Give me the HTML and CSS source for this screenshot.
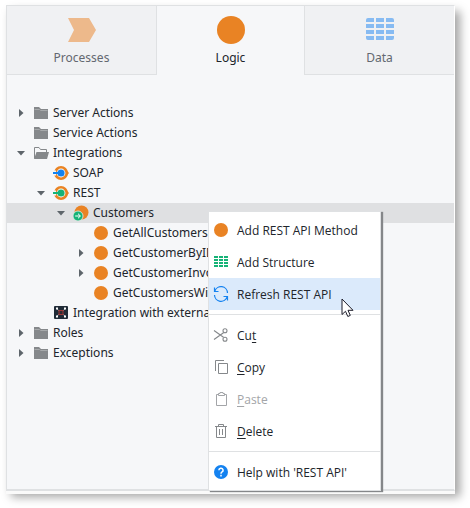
FILE: index.html
```html
<!DOCTYPE html>
<html lang="en">
<head>
<meta charset="utf-8">
<title>Logic</title>
<link rel="stylesheet" href="styles.css">
</head>
<body>
<svg class="defs" aria-hidden="true">
  <symbol id="right" viewBox="0 0 8 8"><path d="M2 0v8l4.500-4z" fill="#5e656b"/></symbol>
  <symbol id="down" viewBox="0 0 8 8"><path d="M0 2h8L4 6.500z" fill="#5e656b"/></symbol>
  <symbol id="folder" viewBox="0 0 16 16"><path d="M1 2h5l2 2h7v10H1z" fill="#85888b"/><path d="M1.500 4.500h5l1 1h7" fill="none" stroke="#a6a9ab"/></symbol>
  <symbol id="open" viewBox="0 0 16 16"><path d="M1.500 13.500v-11h4.500l1.500 2h6v2.500" fill="none" stroke="#85888b"/><path d="M3.500 7H16l-2 7H1z" fill="#85888b"/></symbol>
  <symbol id="dot" viewBox="0 0 16 16"><circle cx="8" cy="8" r="7" fill="#e98324"/></symbol>
  <symbol id="service" viewBox="0 0 16 16"><circle cx="8" cy="8" r="5.700" fill="#fff" stroke="#e98324" stroke-width="2.600"/><path d="M14 5.500l2 2.500-2 2.500z" fill="#e98324"/><path d="M0 5.500h3v5H0z" fill="#f6f7f9"/><path d="M0 8h8" stroke="currentColor" stroke-width="2"/><circle cx="8" cy="8" r="3.600" fill="currentColor"/></symbol>
  <symbol id="consumed" viewBox="0 0 16 16"><circle cx="8.500" cy="7.500" r="7" fill="#e98324"/><circle cx="5" cy="11" r="5" fill="#16b377" stroke="#e8eeeb" stroke-width=".8"/><path d="M2.200 11h5M5 8.700L7.400 11 5 13.300" fill="none" stroke="#fff"/></symbol>
  <symbol id="ext" viewBox="0 0 16 16"><rect x="1" y="1" width="14" height="13" rx="1" fill="#202b37"/><path d="M4 4l8 7M12 4l-8 7" stroke="#8d959c"/><rect x="6" y="5.500" width="4" height="4" fill="#302b34" stroke="#a03838"/><path d="M3 2.500h2v2H3zM11 2.500h2v2h-2zM3 10.500h2v2H3zM11 10.500h2v2h-2z" fill="#fff"/></symbol>
  <symbol id="grid" viewBox="0 0 28 22"><path d="M2 0h6v4H0V2a2 2 0 0 1 2-2zM10 0h8v4h-8zM20 0h6a2 2 0 0 1 2 2v2h-8zM0 6h8v4H0zM10 6h8v4h-8zM20 6h8v4h-8zM0 12h8v4H0zM10 12h8v4h-8zM20 12h8v4h-8zM0 18h8v4H2a2 2 0 0 1-2-2zM10 18h8v4h-8zM20 18h8v2a2 2 0 0 1-2 2h-6z" fill="currentColor"/></symbol>
</svg>
<main class="panel">
  <nav class="tabs">
    <button class="tab"><svg width="28" height="28" viewBox="0 0 28 28"><path d="M0 2h21l7 12-7 12H0l6-12z" fill="#edb98b"/></svg>Processes</button>
    <button class="tab current"><svg width="28" height="28" viewBox="0 0 28 28"><circle cx="14" cy="14" r="14" fill="#e98324"/></svg>Logic</button>
    <button class="tab data"><svg width="28" height="28" viewBox="0 0 28 28"><use href="#grid" y="2" width="28" height="22"/></svg>Data</button>
  </nav>
  <ul class="tree">
    <li class="row"><svg class="arrow"><use href="#right"/></svg><svg class="icon"><use href="#folder"/></svg>Server Actions</li>
    <li class="row"><span class="arrow"></span><svg class="icon"><use href="#folder"/></svg>Service Actions</li>
    <li class="row"><svg class="arrow"><use href="#down"/></svg><svg class="icon"><use href="#open"/></svg>Integrations</li>
    <li class="row level2"><span class="arrow"></span><svg class="icon blue"><use href="#service"/></svg>SOAP</li>
    <li class="row level2"><svg class="arrow"><use href="#down"/></svg><svg class="icon green"><use href="#service"/></svg>REST</li>
    <li class="row level3 selected"><svg class="arrow"><use href="#down"/></svg><svg class="icon"><use href="#consumed"/></svg>Customers</li>
    <li class="row level4"><span class="arrow"></span><svg class="icon"><use href="#dot"/></svg>GetAllCustomers</li>
    <li class="row level4"><svg class="arrow"><use href="#right"/></svg><svg class="icon"><use href="#dot"/></svg>GetCustomerByID</li>
    <li class="row level4"><svg class="arrow"><use href="#right"/></svg><svg class="icon"><use href="#dot"/></svg>GetCustomerInvoices</li>
    <li class="row level4"><span class="arrow"></span><svg class="icon"><use href="#dot"/></svg>GetCustomersWith</li>
    <li class="row level2"><span class="arrow"></span><svg class="icon"><use href="#ext"/></svg>Integration with external</li>
    <li class="row"><svg class="arrow"><use href="#right"/></svg><svg class="icon"><use href="#folder"/></svg>Roles</li>
    <li class="row"><svg class="arrow"><use href="#right"/></svg><svg class="icon"><use href="#folder"/></svg>Exceptions</li>
  </ul>
  <div class="menu">
    <button class="item"><svg class="icon"><use href="#dot"/></svg>Add REST API Method</button>
    <button class="item"><svg class="icon green" viewBox="0 0 16 16"><path d="M1 2h4v2H1zM6 2h4v2H6zM11 2h4v2h-4zM1 5h4v2H1zM6 5h4v2H6zM11 5h4v2h-4zM1 8h4v2H1zM6 8h4v2H6zM11 8h4v2h-4zM1 11h4v2H1zM6 11h4v2H6zM11 11h4v2h-4z" fill="currentColor"/></svg>Add Structure</button>
    <button class="item active"><svg class="icon blue" viewBox="0 0 16 16"><path d="M1.500 1.500v4h4M1.800 5.200A6.500 6.500 0 0 1 14.500 7M14.500 14.500v-4h-4M14.200 10.800A6.500 6.500 0 0 1 1.500 9" fill="none" stroke="currentColor" stroke-width="1.200"/></svg>Refresh REST API</button>
    <hr class="line">
    <button class="item"><svg class="icon gray" viewBox="0 0 16 16"><g fill="none" stroke="currentColor" stroke-width="1.100"><path d="M1 3.500l9.500 6.800M1 12.500l9.500-6.800"/><circle cx="12" cy="3.800" r="2"/><circle cx="12" cy="12.200" r="2"/></g></svg><span>Cu<u>t</u></span></button>
    <button class="item"><svg class="icon gray" viewBox="0 0 16 16"><path d="M2.500 12V1.500H11M5.500 4.500h9v10h-9z" fill="none" stroke="currentColor"/></svg><span><u>C</u>opy</span></button>
    <button class="item" disabled><svg class="icon" viewBox="0 0 16 16"><path d="M5.500 3.500h-2v11h10v-11h-2M5.500 2.500h1.500v-1h3v1h1.500v2h-6z" fill="none" stroke="currentColor"/></svg><span><u>P</u>aste</span></button>
    <button class="item"><svg class="icon gray" viewBox="0 0 16 16"><path d="M2 3.500h12M5.500 3.500v-2h5v2M3.500 3.500v11h9v-11M6.500 6v6M9.500 6v6" fill="none" stroke="currentColor"/></svg><span><u>D</u>elete</span></button>
    <hr class="line">
    <button class="item"><svg class="icon" viewBox="0 0 16 16"><circle cx="8" cy="8" r="7" fill="#1482f0"/><path d="M5.900 6.300a2.100 2 0 1 1 3.200 1.600Q8 8.600 8 9.800M8 10.800v1.600" fill="none" stroke="#fff" stroke-width="1.500"/></svg>Help with 'REST API'</button>
    <svg class="pointer" width="14" height="20" viewBox="0 0 14 20" aria-hidden="true"><path d="M1 1v15.500l3.500-3.200 2.300 5.200 2.500-1.100-2.300-5.100h5z" fill="#fff" stroke="#1c1c2a"/></svg>
  </div>
</main>
</body>
</html>
```
FILE: styles.css
```css
* {
  box-sizing: border-box;
}

body {
  margin: 0;
  padding: 5px 15px 15px 6px;
  min-height: 100vh;
  display: flex;
  background: #fff;
  color: #21252b;
  font: 12px/20px "Noto Sans", sans-serif;
}

.defs {
  position: absolute;
  width: 0;
  height: 0;
}

.panel {
  position: relative;
  flex: 1;
  min-width: 0;
  margin-bottom: 2px;
  background: #f6f7f9;
  border: 1px solid #dfe1e3;
  border-right-color: #fff;
  border-bottom: 2px solid #dfe1e3;
  box-shadow: 0 3px 0 #fafafa, 5px 6px 9px rgb(0 0 0 / 36%);
}

.tabs {
  display: grid;
  grid-template-columns: repeat(3, 1fr);
}

.tab {
  display: flex;
  flex-direction: column;
  align-items: center;
  gap: 4px;
  padding: 10px 0 6px;
  border: 0;
  border-bottom: 1px solid #dfe1e3;
  background: #f0f1f3;
  color: #636870;
  font: inherit;
}

.tab.current {
  background: #f6f7f9;
  border: solid #dfe1e3;
  border-width: 0 1px;
  color: #21252b;
}

.tab.data svg {
  color: #87bbf2;
}

.tree {
  list-style: none;
  margin: 0;
  padding: 28px 0 0;
}

.row {
  display: flex;
  align-items: center;
  height: 20px;
  padding-left: 10px;
  white-space: nowrap;
}

.level2 {
  padding-left: 30px;
}

.level3 {
  padding-left: 50px;
}

.level4 {
  padding-left: 70px;
}

.selected {
  background: #dfe0e2;
}

.arrow {
  flex: none;
  width: 8px;
  height: 8px;
  margin-right: 8px;
}

.icon {
  flex: none;
  width: 16px;
  height: 16px;
}

.row .icon {
  margin-right: 4px;
}

.blue {
  color: #1482f0;
}

.green {
  color: #16b377;
}

.gray {
  color: #85888b;
}

.menu {
  position: absolute;
  top: 205px;
  left: 201px;
  padding: 2px 0;
  width: 173px;
  background: #fff;
  border: 1px solid #dfe1e3;
  box-shadow: 2px 1px 1px #85878a;
}

.item {
  display: flex;
  align-items: center;
  gap: 8px;
  width: 100%;
  height: 32px;
  padding: 2px 4px 0;
  border: 0;
  background: none;
  color: #21252b;
  font: 12px/20px "Open Sans", sans-serif;
  text-align: left;
  white-space: nowrap;
}

.item .icon {
  margin-bottom: 2px;
}

.item.active {
  background: #dbeafb;
}

.item:disabled {
  color: #a3a5a8;
}

.item u {
  text-underline-offset: 2px;
}

.line {
  height: 1px;
  margin: 4px 0;
  border: 0;
  background: #dfe1e3;
}

.pointer {
  position: absolute;
  top: 86px;
  left: 132px;
}
```
